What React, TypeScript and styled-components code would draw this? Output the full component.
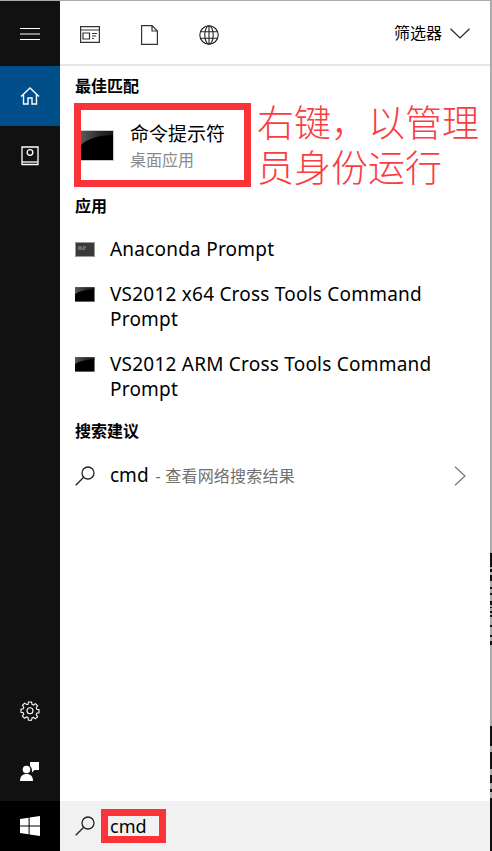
import React from 'react';
import styled, { createGlobalStyle } from 'styled-components';

const GlobalStyle = createGlobalStyle`
  html, body {
    margin: 0;
    padding: 0;
    background: #fff;
  }
  * {
    box-sizing: border-box;
  }
`;

const Frame = styled.div`
  width: 492px;
  height: 851px;
  display: flex;
  border-top: 1px solid #aaa;
  overflow: hidden;
  font-family: "Noto Sans", "Noto Sans CJK SC", sans-serif;
  color: #000;
`;

const Rail = styled.nav`
  width: 60px;
  flex: none;
  display: flex;
  flex-direction: column;
  background: #111;
`;

const RailButton = styled.div<{ $active?: boolean; $h: number; $bg?: string }>`
  height: ${p => p.$h}px;
  display: flex;
  align-items: center;
  justify-content: center;
  background: ${p => (p.$active ? '#004e8a' : p.$bg || 'transparent')};
`;

const RailSpacer = styled.div`
  flex: 1;
`;

const Main = styled.div`
  flex: 1;
  display: flex;
  flex-direction: column;
  min-width: 0;
`;

const TopBar = styled.header`
  height: 65px;
  flex: none;
  display: flex;
  align-items: center;
  gap: 41px;
  padding: 4px 20px 0 20px;
  border-bottom: 2px solid #e6e6e6;
`;

const FilterButton = styled.div`
  margin-left: auto;
  display: flex;
  align-items: center;
  gap: 8px;
  font-size: 16px;
  line-height: 22px;
  margin-top: -3px;
`;

const Results = styled.div`
  flex: 1;
  display: flex;
  flex-direction: column;
  padding-left: 15px;
  padding-top: 9px;
`;

const SectionLabel = styled.h2`
  margin: 0;
  height: 22px;
  line-height: 22px;
  font-size: 16px;
  font-weight: 700;
`;

const BestMatchRow = styled.div`
  display: flex;
  gap: 6px;
  margin: 6px 0 6px -1px;
`;

const RedBox = styled.div`
  width: 177px;
  height: 84px;
  flex: none;
  display: flex;
  align-items: center;
  gap: 16px;
  border: 7px solid #fb3237;
`;

const BestTitle = styled.div`
  font-size: 19px;
  line-height: 24px;
  margin-top: 2px;
`;

const BestSub = styled.div`
  font-size: 16px;
  line-height: 20px;
  margin-top: 4px;
  color: #8a8a8a;
`;

const Note = styled.div`
  width: 226px;
  margin-top: -4px;
  font-family: "Noto Sans CJK SC", sans-serif;
  font-weight: 300;
  font-size: 37px;
  line-height: 45px;
  color: #fb3c40;
`;

const AppList = styled.ul`
  list-style: none;
  margin: 20px 0 0;
  padding: 0;
  display: flex;
  flex-direction: column;
  gap: 20px;
`;

const AppRow = styled.li`
  display: flex;
  gap: 15px;
  font-size: 19px;
  letter-spacing: 0.22px;
  line-height: 25px;
  padding-right: 30px;
`;

const AppIcon = styled.div`
  flex: none;
  height: 25px;
  display: flex;
  align-items: center;
`;

const SuggestionLabel = styled(SectionLabel)`
  margin-top: 18px;
`;

const SuggestionRow = styled.div`
  display: flex;
  align-items: center;
  gap: 15px;
  margin-top: 21px;
  padding-right: 24px;
  font-size: 19px;
  line-height: 25px;
`;

const Hint = styled.span`
  font-size: 16px;
  letter-spacing: 0.2px;
  margin-left: 2px;
  color: #6f6f6f;
`;

const ChevronSlot = styled.div`
  margin-left: auto;
  display: flex;
`;

const SearchBar = styled.div`
  height: 50px;
  flex: none;
  display: flex;
  align-items: center;
  gap: 6px;
  padding-left: 15px;
  background: #f1f1f1;
`;

const QueryBox = styled.div`
  width: 65px;
  height: 34px;
  display: flex;
  align-items: center;
  padding-left: 2px;
  border: 7px solid #fb3237;
  font-size: 18px;
  line-height: 20px;
`;

const EdgeStrip = styled.div`
  width: 2px;
  flex: none;
  background: linear-gradient(
    to bottom,
    #aaa 0 552px,
    #111 552px 566px,
    #aaa 566px 568px,
    #111 568px 571px,
    #aaa 571px 574px,
    #111 574px 580px,
    #aaa 580px 586px,
    #111 586px 588px,
    #aaa 588px 592px,
    #111 592px 594px,
    #aaa 594px 600px,
    #111 600px 604px,
    #aaa 604px 606px,
    #111 606px 607px,
    #aaa 607px 610px,
    #111 610px 612px,
    #aaa 612px 614px,
    #111 614px 616px,
    #aaa 616px 624px,
    #111 624px 626px,
    #aaa 626px 634px,
    #111 634px 636px,
    #aaa 636px 640px,
    #111 640px 644px,
    #aaa 644px 725px,
    #111 725px 745px,
    #aaa 745px 751px,
    #111 751px 768px,
    #aaa 768px 774px,
    #111 774px 782px,
    #aaa 782px 788px,
    #111 788px 791px,
    #aaa 791px 797px,
    #111 797px 850px
  );
`;

const Menu = () => (
  <svg width="20" height="12" viewBox="0 0 20 12" fill="none" stroke="#fff" strokeWidth="1">
    <path d="M0 .5h20M0 6h20M0 11.5h20" />
  </svg>
);

const Home = () => (
  <svg width="20" height="18" viewBox="0 0 20 18" fill="none" stroke="#fff" strokeWidth="1.4">
    <path d="M1 9.5 10 1l9 8.5M3.5 7.5V17h4.5v-6h4v6h4.5V7.5" />
  </svg>
);

const Book = () => (
  <svg width="18" height="20" viewBox="0 0 18 20" fill="none" stroke="#fff" strokeWidth="1.3">
    <path d="M1 18.5V1h16v17.5z" />
    <path d="M1 16h16" />
    <circle cx="9" cy="6.5" r="2.8" />
  </svg>
);

const Gear = () => (
  <svg width="20" height="20" viewBox="0 0 20 20" fill="none" stroke="#fff" strokeWidth="1.1">
    <path d="M8.4 1h3.2l.4 2.4 1.4.6 2-1.4 2.2 2.2-1.4 2 .6 1.4 2.2.4v3.2l-2.2.4-.6 1.4 1.4 2-2.2 2.2-2-1.4-1.4.6-.4 2.3H8.4L8 16.5l-1.4-.6-2 1.4-2.2-2.2 1.4-2-.6-1.4L1 11.3V8.1l2.2-.4.6-1.4-1.4-2 2.2-2.2 2 1.4L8 3.4z" />
    <circle cx="10" cy="9.8" r="3" />
  </svg>
);

const Feedback = () => (
  <svg width="20" height="20" viewBox="0 0 20 20" fill="#fff">
    <path d="M10 1h9v8h-4.5L12 11.5V9.5c0-2-.8-3.6-2-4.6z" />
    <circle cx="6.5" cy="8.5" r="3.8" />
    <path d="M0 20c0-4.5 2.5-7 6.5-7s6.5 2.5 6.5 7z" />
  </svg>
);

const WindowsLogo = () => (
  <svg width="20" height="20" viewBox="0 0 20 20" fill="#fff">
    <path d="M0 3 8.6 1.8v7.6H0zM9.6 1.6 20 0v9.4H9.6zM0 10.4h8.6v7.8L0 17zM9.6 10.4H20V20L9.6 18.4z" />
  </svg>
);

const Tile = () => (
  <svg width="20" height="17" viewBox="0 0 20 17" fill="none" stroke="#333" strokeWidth="1.2">
    <path d="M.6.6h18.8v15.8H.6zM.6 4h18.8" />
    <path d="M3 7h6.5v6H3zM12 7.5h5M12 10h4M12 12.5h2" />
  </svg>
);

const Page = () => (
  <svg width="17" height="20" viewBox="0 0 17 20" fill="none" stroke="#333" strokeWidth="1.2">
    <path d="M.6.6h10.4l5.4 5.4v13.4H.6zM11 .6V6h5.4" />
  </svg>
);

const Globe = () => (
  <svg width="20" height="20" viewBox="0 0 20 20" fill="none" stroke="#222" strokeWidth="1.1">
    <circle cx="10" cy="10" r="9.2" />
    <ellipse cx="10" cy="10" rx="4.2" ry="9.2" />
    <path d="M10 .8v18.4M1.4 6.8h17.2M1.4 13.2h17.2" />
  </svg>
);

const ChevronDown = () => (
  <svg width="20" height="11" viewBox="0 0 20 11" fill="none" stroke="#222" strokeWidth="1.2">
    <path d="M.5.8 10 10 19.5.8" />
  </svg>
);

const ChevronRight = () => (
  <svg width="12" height="20" viewBox="0 0 12 20" fill="none" stroke="#777" strokeWidth="1.2">
    <path d="M1 .8 11 10 1 19.2" />
  </svg>
);

const Magnifier = () => (
  <svg width="20" height="20" viewBox="0 0 20 20" fill="none" stroke="#222" strokeWidth="1.3">
    <circle cx="13" cy="7" r="6" />
    <path d="M8.7 11.3.7 19.3" />
  </svg>
);

const CmdIcon = ({ w, h }: { w: number; h: number }) => (
  <svg width={w} height={h} viewBox="0 0 33 31" preserveAspectRatio="none">
    <defs>
      <linearGradient id="gloss" x1="0" y1="0" x2="1" y2="0">
        <stop offset="0" stopColor="#5a5a5a" />
        <stop offset="0.6" stopColor="#2a2a2a" />
        <stop offset="1" stopColor="#161616" />
      </linearGradient>
    </defs>
    <rect width="33" height="31" fill="#c4c8cc" />
    <rect y="1" width="32" height="29" fill="#000" />
    <path d="M0 1h32v4C18 5 6 9 0 15z" fill="url(#gloss)" />
  </svg>
);

const AnacondaIcon = () => (
  <svg width="20" height="15" viewBox="0 0 20 15">
    <rect width="20" height="15" fill="#9a9a9a" />
    <rect x="1" y="1" width="18" height="13" fill="#3a3a3a" />
    <path d="M3 5h4M8 5h3M3 7h7" stroke="#999" strokeWidth="1" />
  </svg>
);

export default function App() {
  return (
    <>
      <GlobalStyle />
      <Frame>
        <Rail>
          <RailButton $h={65}><Menu /></RailButton>
          <RailButton $active $h={60}><Home /></RailButton>
          <RailButton $h={60}><Book /></RailButton>
          <RailSpacer />
          <RailButton $h={60}><Gear /></RailButton>
          <RailButton $h={60}><Feedback /></RailButton>
          <RailButton $h={50} $bg="#000"><WindowsLogo /></RailButton>
        </Rail>
        <Main>
          <TopBar>
            <Tile />
            <Page />
            <Globe />
            <FilterButton>筛选器 <ChevronDown /></FilterButton>
          </TopBar>
          <Results>
            <SectionLabel>最佳匹配</SectionLabel>
            <BestMatchRow>
              <RedBox>
                <CmdIcon w={33} h={31} />
                <div>
                  <BestTitle>命令提示符</BestTitle>
                  <BestSub>桌面应用</BestSub>
                </div>
              </RedBox>
              <Note>右键，以管理员身份运行</Note>
            </BestMatchRow>
            <SectionLabel>应用</SectionLabel>
            <AppList>
              <AppRow>
                <AppIcon><AnacondaIcon /></AppIcon>
                Anaconda Prompt
              </AppRow>
              <AppRow>
                <AppIcon><CmdIcon w={20} h={15} /></AppIcon>
                VS2012 x64 Cross Tools Command Prompt
              </AppRow>
              <AppRow>
                <AppIcon><CmdIcon w={20} h={15} /></AppIcon>
                VS2012 ARM Cross Tools Command Prompt
              </AppRow>
            </AppList>
            <SuggestionLabel>搜索建议</SuggestionLabel>
            <SuggestionRow>
              <Magnifier />
              <span>cmd <Hint>- 查看网络搜索结果</Hint></span>
              <ChevronSlot><ChevronRight /></ChevronSlot>
            </SuggestionRow>
          </Results>
          <SearchBar>
            <Magnifier />
            <QueryBox>cmd</QueryBox>
          </SearchBar>
        </Main>
        <EdgeStrip />
      </Frame>
    </>
  );
}
